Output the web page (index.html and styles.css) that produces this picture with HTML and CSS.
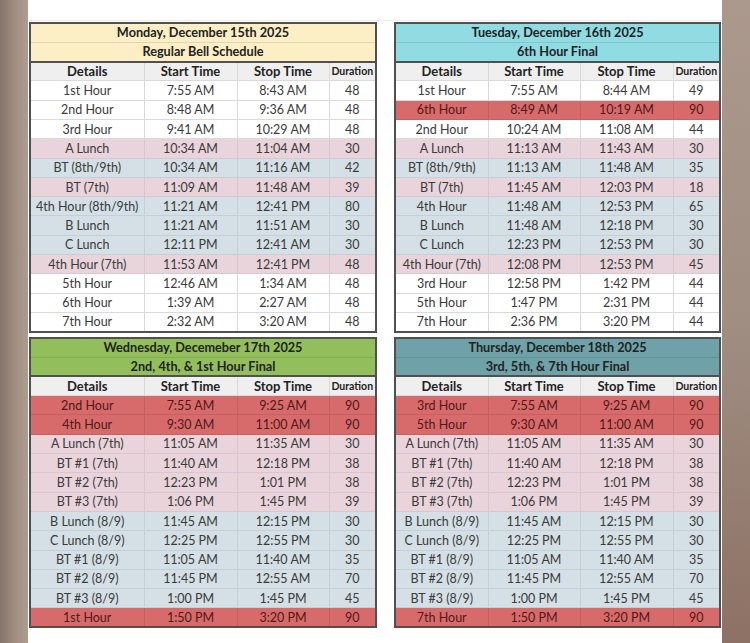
FILE: index.html
```html
<!DOCTYPE html>
<html>
<head>
<meta charset="utf-8">
<link rel="stylesheet" href="styles.css">
</head>
<body>
<div class="screen">
  <div class="side side-left"></div>
  <div class="sheet">
    <div class="grid">
      <table class="sched wide">
        <colgroup><col class="c1"><col class="c2"><col class="c3"><col class="c4"></colgroup>
        <tr class="title t-yellow"><td colspan="4">Monday, December 15th 2025</td></tr>
        <tr class="title t-yellow last"><td colspan="4">Regular Bell Schedule</td></tr>
        <tr class="head"><td>Details</td><td>Start Time</td><td>Stop Time</td><td class="dur">Duration</td></tr>
        <tr><td>1st Hour</td><td>7:55 AM</td><td>8:43 AM</td><td>48</td></tr>
        <tr><td>2nd Hour</td><td>8:48 AM</td><td>9:36 AM</td><td>48</td></tr>
        <tr><td>3rd Hour</td><td>9:41 AM</td><td>10:29 AM</td><td>48</td></tr>
        <tr class="pink"><td>A Lunch</td><td>10:34 AM</td><td>11:04 AM</td><td>30</td></tr>
        <tr class="blue"><td>BT (8th/9th)</td><td>10:34 AM</td><td>11:16 AM</td><td>42</td></tr>
        <tr class="pink"><td>BT (7th)</td><td>11:09 AM</td><td>11:48 AM</td><td>39</td></tr>
        <tr class="blue"><td>4th Hour (8th/9th)</td><td>11:21 AM</td><td>12:41 PM</td><td>80</td></tr>
        <tr class="blue"><td>B Lunch</td><td>11:21 AM</td><td>11:51 AM</td><td>30</td></tr>
        <tr class="blue"><td>C Lunch</td><td>12:11 PM</td><td>12:41 AM</td><td>30</td></tr>
        <tr class="pink"><td>4th Hour (7th)</td><td>11:53 AM</td><td>12:41 PM</td><td>48</td></tr>
        <tr><td>5th Hour</td><td>12:46 AM</td><td>1:34 AM</td><td>48</td></tr>
        <tr><td>6th Hour</td><td>1:39 AM</td><td>2:27 AM</td><td>48</td></tr>
        <tr><td>7th Hour</td><td>2:32 AM</td><td>3:20 AM</td><td>48</td></tr>
      </table>

      <table class="sched narrow">
        <colgroup><col class="c1"><col class="c2"><col class="c3"><col class="c4"></colgroup>
        <tr class="title t-cyan"><td colspan="4">Tuesday, December 16th 2025</td></tr>
        <tr class="title t-cyan last"><td colspan="4">6th Hour Final</td></tr>
        <tr class="head"><td>Details</td><td>Start Time</td><td>Stop Time</td><td class="dur">Duration</td></tr>
        <tr><td>1st Hour</td><td>7:55 AM</td><td>8:44 AM</td><td>49</td></tr>
        <tr class="red"><td>6th Hour</td><td>8:49 AM</td><td>10:19 AM</td><td>90</td></tr>
        <tr><td>2nd Hour</td><td>10:24 AM</td><td>11:08 AM</td><td>44</td></tr>
        <tr class="pink"><td>A Lunch</td><td>11:13 AM</td><td>11:43 AM</td><td>30</td></tr>
        <tr class="blue"><td>BT (8th/9th)</td><td>11:13 AM</td><td>11:48 AM</td><td>35</td></tr>
        <tr class="pink"><td>BT (7th)</td><td>11:45 AM</td><td>12:03 PM</td><td>18</td></tr>
        <tr class="blue"><td>4th Hour</td><td>11:48 AM</td><td>12:53 PM</td><td>65</td></tr>
        <tr class="blue"><td>B Lunch</td><td>11:48 AM</td><td>12:18 PM</td><td>30</td></tr>
        <tr class="blue"><td>C Lunch</td><td>12:23 PM</td><td>12:53 PM</td><td>30</td></tr>
        <tr class="pink"><td>4th Hour (7th)</td><td>12:08 PM</td><td>12:53 PM</td><td>45</td></tr>
        <tr><td>3rd Hour</td><td>12:58 PM</td><td>1:42 PM</td><td>44</td></tr>
        <tr><td>5th Hour</td><td>1:47 PM</td><td>2:31 PM</td><td>44</td></tr>
        <tr><td>7th Hour</td><td>2:36 PM</td><td>3:20 PM</td><td>44</td></tr>
      </table>

      <table class="sched wide">
        <colgroup><col class="c1"><col class="c2"><col class="c3"><col class="c4"></colgroup>
        <tr class="title t-green"><td colspan="4">Wednesday, Decemeber 17th 2025</td></tr>
        <tr class="title t-green last"><td colspan="4">2nd, 4th, &amp; 1st Hour Final</td></tr>
        <tr class="head"><td>Details</td><td>Start Time</td><td>Stop Time</td><td class="dur">Duration</td></tr>
        <tr class="red"><td>2nd Hour</td><td>7:55 AM</td><td>9:25 AM</td><td>90</td></tr>
        <tr class="red"><td>4th Hour</td><td>9:30 AM</td><td>11:00 AM</td><td>90</td></tr>
        <tr class="pink"><td>A Lunch (7th)</td><td>11:05 AM</td><td>11:35 AM</td><td>30</td></tr>
        <tr class="pink"><td>BT #1 (7th)</td><td>11:40 AM</td><td>12:18 PM</td><td>38</td></tr>
        <tr class="pink"><td>BT #2 (7th)</td><td>12:23 PM</td><td>1:01 PM</td><td>38</td></tr>
        <tr class="pink"><td>BT #3 (7th)</td><td>1:06 PM</td><td>1:45 PM</td><td>39</td></tr>
        <tr class="blue"><td>B Lunch (8/9)</td><td>11:45 AM</td><td>12:15 PM</td><td>30</td></tr>
        <tr class="blue"><td>C Lunch (8/9)</td><td>12:25 PM</td><td>12:55 PM</td><td>30</td></tr>
        <tr class="blue"><td>BT #1 (8/9)</td><td>11:05 AM</td><td>11:40 AM</td><td>35</td></tr>
        <tr class="blue"><td>BT #2 (8/9)</td><td>11:45 PM</td><td>12:55 AM</td><td>70</td></tr>
        <tr class="blue"><td>BT #3 (8/9)</td><td>1:00 PM</td><td>1:45 PM</td><td>45</td></tr>
        <tr class="red"><td>1st Hour</td><td>1:50 PM</td><td>3:20 PM</td><td>90</td></tr>
      </table>

      <table class="sched narrow">
        <colgroup><col class="c1"><col class="c2"><col class="c3"><col class="c4"></colgroup>
        <tr class="title t-teal"><td colspan="4">Thursday, December 18th 2025</td></tr>
        <tr class="title t-teal last"><td colspan="4">3rd, 5th, &amp; 7th Hour Final</td></tr>
        <tr class="head"><td>Details</td><td>Start Time</td><td>Stop Time</td><td class="dur">Duration</td></tr>
        <tr class="red"><td>3rd Hour</td><td>7:55 AM</td><td>9:25 AM</td><td>90</td></tr>
        <tr class="red"><td>5th Hour</td><td>9:30 AM</td><td>11:00 AM</td><td>90</td></tr>
        <tr class="pink"><td>A Lunch (7th)</td><td>11:05 AM</td><td>11:35 AM</td><td>30</td></tr>
        <tr class="pink"><td>BT #1 (7th)</td><td>11:40 AM</td><td>12:18 PM</td><td>38</td></tr>
        <tr class="pink"><td>BT #2 (7th)</td><td>12:23 PM</td><td>1:01 PM</td><td>38</td></tr>
        <tr class="pink"><td>BT #3 (7th)</td><td>1:06 PM</td><td>1:45 PM</td><td>39</td></tr>
        <tr class="blue"><td>B Lunch (8/9)</td><td>11:45 AM</td><td>12:15 PM</td><td>30</td></tr>
        <tr class="blue"><td>C Lunch (8/9)</td><td>12:25 PM</td><td>12:55 PM</td><td>30</td></tr>
        <tr class="blue"><td>BT #1 (8/9)</td><td>11:05 AM</td><td>11:40 AM</td><td>35</td></tr>
        <tr class="blue"><td>BT #2 (8/9)</td><td>11:45 PM</td><td>12:55 AM</td><td>70</td></tr>
        <tr class="blue"><td>BT #3 (8/9)</td><td>1:00 PM</td><td>1:45 PM</td><td>45</td></tr>
        <tr class="red"><td>7th Hour</td><td>1:50 PM</td><td>3:20 PM</td><td>90</td></tr>
      </table>
    </div>
  </div>
  <div class="side side-right"></div>
</div>
</body>
</html>
```
FILE: styles.css
```css
html, body {
  margin: 0;
  padding: 0;
}
body {
  width: 750px;
  height: 643px;
  overflow: hidden;
  font-family: Lato, "Open Sans", sans-serif;
  color: #3a3a3a;
}
.screen {
  display: flex;
  width: 750px;
  height: 643px;
}
.side {
  width: 28px;
  flex: none;
}
.side-left {
  background: linear-gradient(90deg, #86756a 0%, #9d8c7f 50%, #ae9d8f 100%);
}
.side-right {
  background: linear-gradient(180deg, #ac998d 0%, #a08e83 50%, #8d7164 100%);
}
.sheet {
  flex: 1;
  background: #fff;
  padding: 22px 0 0 1px;
  background-image: linear-gradient(#ececec, #ececec);
  background-size: 100% 1px;
  background-position: 0 20px;
  background-repeat: no-repeat;
}
.grid {
  display: grid;
  grid-template-columns: 346px 325px;
  column-gap: 19px;
  row-gap: 4px;
  align-items: start;
}
.sched {
  border-collapse: collapse;
  table-layout: fixed;
  border: 2px solid #505050;
  font-size: 12.5px;
}
.sched.wide { width: 346px; }
.sched.narrow { width: 325px; }
.wide .c1 { width: 114px; }
.wide .c2 { width: 93px; }
.wide .c3 { width: 92px; }
.wide .c4 { width: 47px; }
.narrow .c1 { width: 93px; }
.narrow .c2 { width: 92px; }
.narrow .c3 { width: 93px; }
.narrow .c4 { width: 47px; }
.sched tr {
  height: 19.3px;
}
.sched td {
  padding: 0;
  text-align: center;
  white-space: nowrap;
  border: 1px solid #dadada;
  line-height: 17px;
}
.title td {
  font-weight: 700;
  font-size: 12.7px;
  color: #222;
  border-left: none;
  border-right: none;
  border-color: rgba(0, 0, 0, 0.1);
}
.title.last td {
  border-bottom: 2px solid #505050;
}
.t-yellow { background: #fcefc6; }
.t-cyan { background: #91dce2; }
.t-green { background: #92bf5b; }
.t-teal { background: #6fa2a8; }
.head {
  background: #efefef;
}
.head td {
  font-weight: 700;
  color: #222;
  font-size: 13px;
}
.head td.dur {
  font-size: 10.5px;
}
.pink { background: #e9d4dc; }
.blue { background: #d4e0e5; }
.red { background: #d76b6b; }
.red td {
  color: #511818;
  border-color: #c46060;
}
.pink td { border-color: #d8c7ce; }
.blue td { border-color: #c3d0d5; }
```
